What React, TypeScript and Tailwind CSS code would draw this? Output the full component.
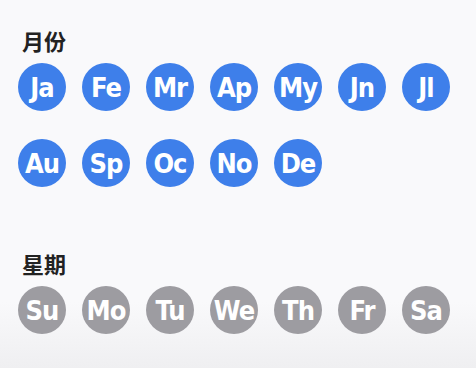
const months = ['Ja', 'Fe', 'Mr', 'Ap', 'My', 'Jn', 'Jl', 'Au', 'Sp', 'Oc', 'No', 'De'];
const weekdays = ['Su', 'Mo', 'Tu', 'We', 'Th', 'Fr', 'Sa'];

function Badge({ label, tone }: { label: string; tone: 'blue' | 'gray' }) {
  const bg = tone === 'blue' ? 'bg-[#3e7fea]' : 'bg-[#9d9ca1]';
  return (
    <div
      className={`w-12 h-12 rounded-full ${bg} flex items-center justify-center text-white font-bold text-[27px] tracking-[-1px] leading-none`}
      style={{ fontFamily: '"DejaVu Sans Condensed", "DejaVu Sans", sans-serif' }}
    >
      {label}
    </div>
  );
}

function Section({ title, items, tone }: { title: string; items: string[]; tone: 'blue' | 'gray' }) {
  return (
    <section>
      <h2
        className="pl-1 text-[22px] font-bold leading-7 text-[#222222] mb-[9px]"
        style={{ fontFamily: '"Noto Sans CJK SC", sans-serif' }}
      >
        {title}
      </h2>
      <div className="flex flex-wrap gap-x-4 gap-y-7">
        {items.map((m) => (
          <Badge key={m} label={m} tone={tone} />
        ))}
      </div>
    </section>
  );
}

export default function App() {
  return (
    <div className="h-screen w-full bg-[linear-gradient(to_bottom,#f9f9fb_0%,#f9f9fb_82%,#efeff1_100%)] px-[18px] pt-[26px] flex flex-col gap-[62px]">
      <Section title="月份" items={months} tone="blue" />
      <Section title="星期" items={weekdays} tone="gray" />
    </div>
  );
}
